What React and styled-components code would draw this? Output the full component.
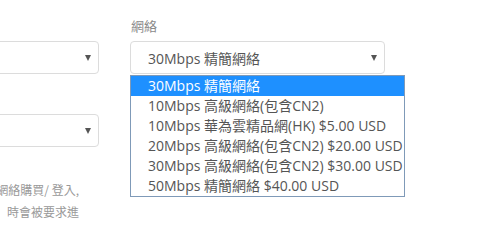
import React from "react";
import styled, { createGlobalStyle } from "styled-components";

const Global = createGlobalStyle`
  html, body { margin: 0; padding: 0; background: #fff; }
  body { font-family: "Open Sans", "Noto Sans CJK TC", sans-serif; overflow: hidden; }
`;

const Page = styled.div`
  display: flex;
  gap: 31px;
  margin-left: -151px;
  padding-top: 16px;
  width: 700px;
`;

const Column = styled.div`
  width: ${(p) => p.$w}px;
  display: flex;
  flex-direction: column;
  position: relative;
`;

const Label = styled.div`
  font-size: 13px;
  line-height: 20px;
  height: 20px;
  color: #8a8a8a;
  margin-bottom: 5px;
  padding-left: 1px;
  font-family: "Noto Sans CJK TC", sans-serif;
`;

const SelectWrap = styled.div`
  position: relative;
  margin-bottom: ${(p) => p.$mb || 0}px;
`;

const SelectBox = styled.div`
  box-sizing: border-box;
  height: 33px;
  border: 1px solid #dcdcdc;
  border-radius: 4px;
  background: #fff;
  display: flex;
  align-items: center;
  padding: 0 7px 0 17px;
  font-size: 14px;
  color: #555;
  white-space: nowrap;
`;

const Value = styled.span`
  flex: 1;
`;

const Arrow = styled.span`
  width: 0;
  height: 0;
  border-left: 3.5px solid transparent;
  border-right: 3.5px solid transparent;
  border-top: 6px solid #555;
  margin-top: 1px;
`;

const Dropdown = styled.ul`
  position: absolute;
  top: calc(100% + 1px);
  left: 0;
  width: 275px;
  box-sizing: border-box;
  margin: 0;
  padding: 0;
  list-style: none;
  border: 1px solid #7f9ab8;
  background: #fff;
  z-index: 2;
`;

const Option = styled.li`
  height: 20px;
  line-height: 20px;
  padding-left: 17px;
  font-size: 14px;
  white-space: nowrap;
  color: ${(p) => (p.$active ? "#fff" : "#555")};
  background: ${(p) => (p.$active ? "#1e90ff" : "transparent")};
`;

const Note = styled.p`
  margin: 32px 0 0;
  width: 230px;
  font-size: 12px;
  line-height: 22px;
  color: #999;
  text-align: right;
  font-family: "Noto Sans CJK TC", sans-serif;
  white-space: nowrap;
`;

const options = [
  "30Mbps 精簡網絡",
  "10Mbps 高級網絡(包含CN2)",
  "10Mbps 華為雲精品網(HK) $5.00 USD",
  "20Mbps 高級網絡(包含CN2) $20.00 USD",
  "30Mbps 高級網絡(包含CN2) $30.00 USD",
  "50Mbps 精簡網絡 $40.00 USD",
];

export default function App() {
  return (
    <>
      <Global />
      <Page>
        <Column $w={250}>
          <Label />
          <SelectWrap $mb={15}>
            <SelectBox>
              <Value />
              <Arrow />
            </SelectBox>
          </SelectWrap>
          <Label />
          <SelectWrap>
            <SelectBox>
              <Value />
              <Arrow />
            </SelectBox>
          </SelectWrap>
          <Note>
            網絡購買/ 登入,
            <br />
            時會被要求進
          </Note>
        </Column>
        <Column $w={255}>
          <Label>網絡</Label>
          <SelectWrap>
            <SelectBox>
              <Value>30Mbps 精簡網絡</Value>
              <Arrow />
            </SelectBox>
            <Dropdown>
              {options.map((o, i) => (
                <Option key={o} $active={i === 0}>
                  {o}
                </Option>
              ))}
            </Dropdown>
          </SelectWrap>
        </Column>
      </Page>
    </>
  );
}
